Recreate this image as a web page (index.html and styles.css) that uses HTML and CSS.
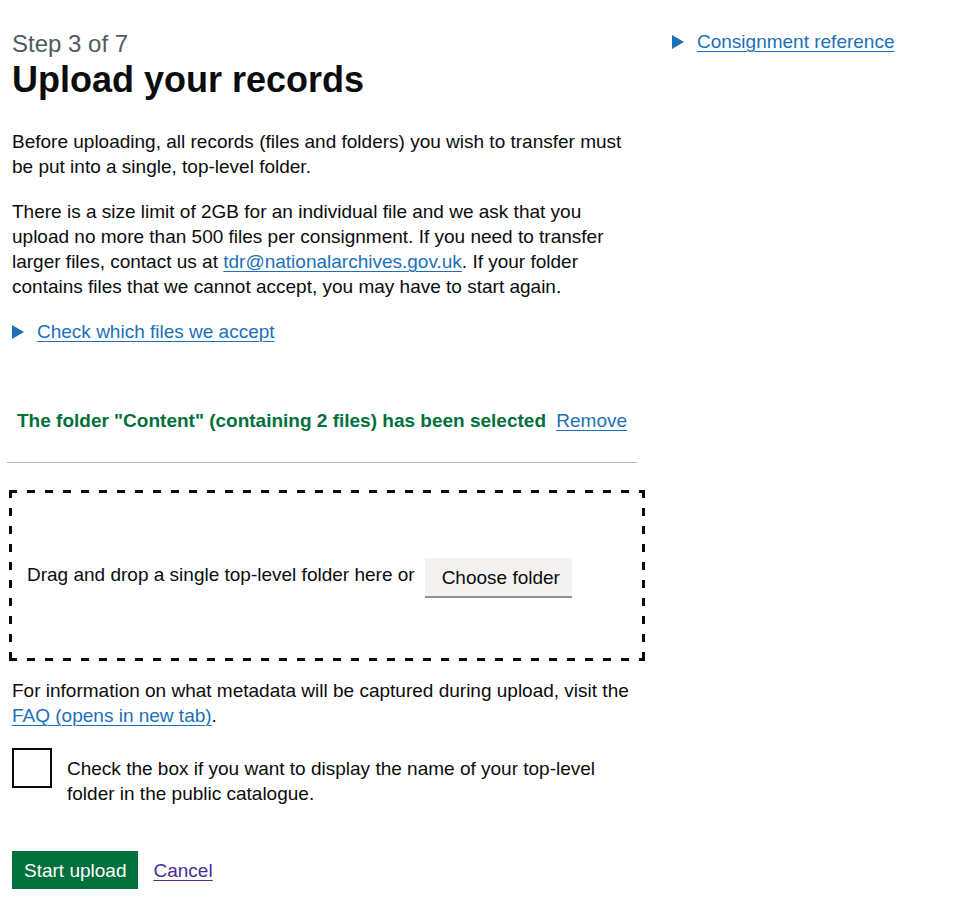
FILE: index.html
```html
<!DOCTYPE html>
<html lang="en">
<head>
<meta charset="utf-8">
<title>Upload your records</title>
<link rel="stylesheet" href="styles.css">
</head>
<body>
<div class="page">
  <main class="main-col">
    <span class="caption">Step 3 of 7</span>
    <h1 class="heading">Upload your records</h1>
    <p class="body">Before uploading, all records (files and folders) you wish to transfer must be put into a single, top-level folder.</p>
    <p class="body">There is a size limit of 2GB for an individual file and we ask that you upload no more than 500 files per consignment. If you need to transfer larger files, contact us at <a class="link" href="#">tdr@nationalarchives.gov.uk</a>. If your folder contains files that we cannot accept, you may have to start again.</p>
    <details class="details">
      <summary class="summary"><span class="summary-text">Check which files we accept</span></summary>
    </details>

    <div class="selected">
      <span class="selected-text">The folder "Content" (containing 2 files) has been selected</span>
      <a class="link" href="#">Remove</a>
    </div>
    <hr class="rule">

    <div class="dropzone">
      <span class="drop-text">Drag and drop a single top-level folder here or</span>
      <button class="btn-secondary" type="button">Choose folder</button>
    </div>

    <p class="body info">For information on what metadata will be captured during upload, visit the <a class="link" href="#">FAQ (opens in new tab)</a>.</p>

    <div class="checkbox-item">
      <span class="checkbox-box"></span>
      <label class="checkbox-label">Check the box if you want to display the name of your top-level folder in the public catalogue.</label>
    </div>

    <div class="actions">
      <button class="btn-primary" type="button">Start upload</button>
      <a class="link visited" href="#">Cancel</a>
    </div>
  </main>
  <aside class="side-col">
    <details class="details">
      <summary class="summary"><span class="summary-text">Consignment reference</span></summary>
    </details>
  </aside>
</div>
</body>
</html>
```

FILE: styles.css
```css
* { box-sizing: border-box; }

body {
  margin: 0;
  background: #ffffff;
  color: #0b0c0c;
  font-family: "Liberation Sans", Arial, sans-serif;
}

.page {
  display: flex;
  padding: 29px 0 0 12px;
}

.main-col {
  width: 625px;
  flex: none;
}

.side-col {
  margin-left: 35px;
  flex: none;
}

.caption {
  display: block;
  font-size: 24px;
  line-height: 30px;
  color: #505a5f;
}

.heading {
  margin: 1px 0 29px;
  font-size: 36px;
  line-height: 40px;
  font-weight: 700;
}

.body {
  margin: 0 0 20px;
  font-size: 19px;
  line-height: 25px;
}

.link {
  color: #1d70b8;
  text-decoration: underline;
  text-decoration-thickness: 1px;
  text-underline-offset: 0.1578em;
}

.link.visited { color: #4c2c92; }

.details {
  font-size: 19px;
  line-height: 25px;
  margin: 0;
}

.summary {
  display: block;
  position: relative;
  padding-left: 25px;
  color: #1d70b8;
  cursor: pointer;
  list-style: none;
}

.summary::-webkit-details-marker { display: none; }

.summary::before {
  content: "";
  position: absolute;
  left: 0;
  top: 6px;
  width: 0;
  height: 0;
  border-style: solid;
  border-color: transparent;
  border-left-color: #1d70b8;
  border-width: 7px 0 7px 12px;
}

.summary-text {
  text-decoration: underline;
  text-decoration-thickness: 1px;
  text-underline-offset: 0.1578em;
}

.selected {
  margin: 64px 0 0;
  padding-left: 5px;
  font-size: 19px;
  line-height: 25px;
}

.selected-text {
  color: #00703c;
  font-weight: 700;
  margin-right: 5px;
}

.rule {
  margin: 29px 0 0 -5px;
  width: 630px;
  border: 0;
  border-top: 1px solid #b1b4b6;
}

.dropzone {
  margin: 27px 0 0 -3px;
  width: 636px;
  height: 171px;
  padding: 3px 3px 3px 18px;
  display: flex;
  align-items: center;
  font-size: 19px;
  line-height: 25px;
  background:
    repeating-linear-gradient(to right, #0b0c0c 0 8px, transparent 8px 18px) left top / 100% 3px no-repeat,
    repeating-linear-gradient(to right, #0b0c0c 0 8px, transparent 8px 18px) left bottom / 100% 3px no-repeat,
    repeating-linear-gradient(to bottom, #0b0c0c 0 8px, transparent 8px 18px) left top / 3px 100% no-repeat,
    repeating-linear-gradient(to bottom, #0b0c0c 0 8px, transparent 8px 18px) right top / 3px 100% no-repeat;
}

.drop-text { margin-right: 10px; position: relative; top: -1px; }

.btn-secondary {
  font-family: inherit;
  font-size: 19px;
  line-height: 19px;
  padding: 8px 10px 7px 15px;
  border: 2px solid transparent;
  border-radius: 0;
  background: #f3f2f1;
  color: #0b0c0c;
  box-shadow: 0 2px 0 #929191;
  margin-top: 3px;
}

.info {
  margin-top: 17px;
}

.checkbox-item {
  display: flex;
  align-items: flex-start;
}

.checkbox-box {
  flex: none;
  width: 40px;
  height: 40px;
  border: 2px solid #0b0c0c;
  background: #fff;
}

.checkbox-label {
  padding: 8px 15px 5px;
  font-size: 19px;
  line-height: 25px;
}

.actions {
  display: flex;
  align-items: center;
  gap: 15px;
  margin-top: 40px;
  font-size: 19px;
  line-height: 25px;
}

.btn-primary {
  font-family: inherit;
  font-size: 19px;
  line-height: 19px;
  padding: 8px 10px 7px;
  border: 2px solid transparent;
  border-radius: 0;
  background: #00703c;
  color: #ffffff;
  box-shadow: 0 2px 0 #002d18;
}
```
